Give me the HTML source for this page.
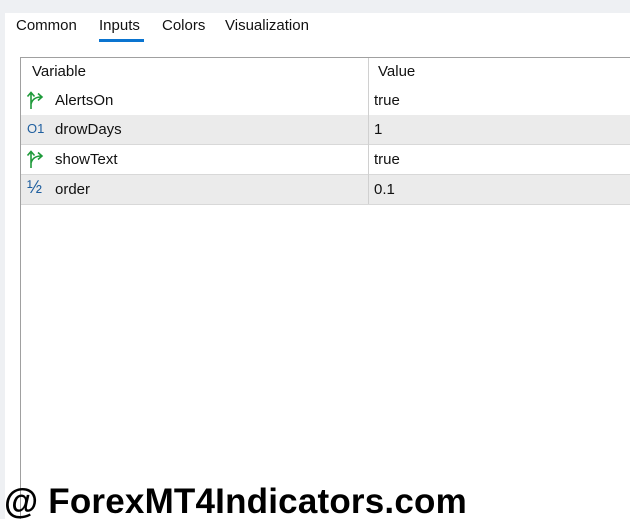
<!DOCTYPE html><html style="overflow:hidden;height:519px"><head><style>
body{margin:0;width:630px;height:519px;background:#eef0f3;position:relative;overflow:hidden;font-family:"Segoe UI","Liberation Sans",sans-serif;font-size:15px;color:#111}
.pg{position:absolute;left:5px;top:13px;right:0;bottom:0;background:#fff}
.tab{position:absolute;top:17px}
.tbl{position:absolute;left:20px;top:57px;width:620px;height:470px;border:1px solid #a0a0a0;border-right:none;background:#fff}
.row{position:absolute;left:0;width:620px;height:29px;border-bottom:1px solid #d8d8d8}
.g{background:#ebebeb}
.row span{position:absolute;top:6px}
.div{position:absolute;left:347px;top:0;width:1px;height:146px;background:#d0d0d0}
.wm{position:absolute;left:4px;top:482px;font:bold 35px "Liberation Sans",Arial,sans-serif;color:#000;letter-spacing:0.2px}
</style></head><body>
<div class="pg"></div>
<div class="tab" style="left:16px">Common</div>
<div class="tab" style="left:99px">Inputs</div>
<div style="position:absolute;left:99px;top:39px;width:45px;height:3px;background:#0a74d0"></div>
<div class="tab" style="left:162px">Colors</div>
<div class="tab" style="left:225px">Visualization</div>
<div class="tbl">
<div class="row" style="top:0;height:28px;border:none"><span style="left:11px;top:5px">Variable</span><span style="left:357px;top:5px">Value</span></div>
<div class="row" style="top:28px"><svg style="position:absolute;left:5px;top:3px" width="22" height="22"><path d="M5 20V4M1.5 7.5L5 3.5l3.5 4M5 15q2-7 10-7M12 4.5l4 3.5-4 3.5" stroke="#1e9a3a" stroke-width="1.6" fill="none"/></svg><span style="left:34px">AlertsOn</span><span style="left:353px">true</span></div>
<div class="row g" style="top:57px"><span style="left:6px;color:#1f5f9f;font-size:13px;top:6px">O1</span><span style="left:34px">drowDays</span><span style="left:353px">1</span></div>
<div class="row" style="top:87px"><svg style="position:absolute;left:5px;top:3px" width="22" height="22"><path d="M5 20V4M1.5 7.5L5 3.5l3.5 4M5 15q2-7 10-7M12 4.5l4 3.5-4 3.5" stroke="#1e9a3a" stroke-width="1.6" fill="none"/></svg><span style="left:34px">showText</span><span style="left:353px">true</span></div>
<div class="row g" style="top:117px"><span style="left:6px;color:#1f5f9f;font-size:18px;top:2px">½</span><span style="left:34px">order</span><span style="left:353px">0.1</span></div>
<div class="div"></div>
</div>
<div class="wm">@ ForexMT4Indicators.com</div>
</body></html>
